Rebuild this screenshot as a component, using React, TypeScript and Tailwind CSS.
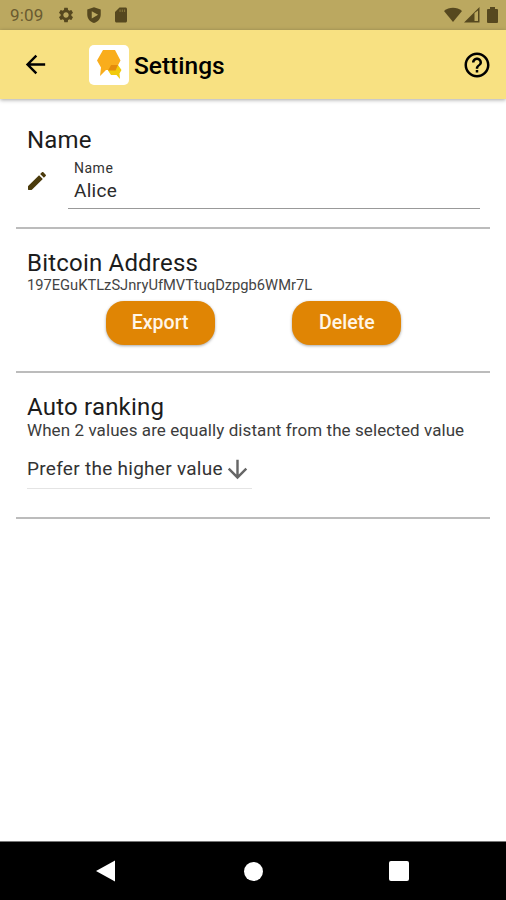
import type { ReactNode } from 'react'
import { MdArrowBack, MdArrowDownward, MdHelpOutline, MdSettings } from 'react-icons/md'

function StatusBar() {
  return (
    <div className="flex h-[30px] items-center bg-[#bba860] pl-[10px] pr-[8px] text-[#56481f]">
      <span className="w-[47px] text-[17px] leading-none tracking-[0.2px] text-[#6a5b30]">9:09</span>
      <MdSettings size={18} />
      <svg className="ml-[10px]" width="18" height="18" viewBox="0 0 24 24" fill="currentColor" fillRule="evenodd">
        <path d="M12 1.500 3 4.800v6.400c0 5.600 3.800 9.800 9 11.300 5.200-1.500 9-5.700 9-11.300V4.800L12 1.500zM9 7l8.500 4.500L9 16.500z" />
      </svg>
      <svg className="ml-[9px]" width="18" height="18" viewBox="0 0 24 24" fill="currentColor">
        <path d="M18 2h-8L4 8v12c0 1.100.9 2 2 2h12c1.100 0 2-.9 2-2V4c0-1.100-.9-2-2-2z" />
        <path d="M10 4.500h1.500V8H10zM13 4.500h1.500V8H13zM16 4.500h1.500V8H16z" fill="#85743a" />
      </svg>
      <div className="ml-auto flex items-center">
        <svg width="18" height="16" viewBox="0 0 18 16" fill="currentColor">
          <path d="M0 4C5-.3 13-.3 18 4L9 15z" />
        </svg>
        <svg className="ml-[2px]" width="16" height="16" viewBox="0 0 16 16" fill="currentColor" fillRule="evenodd">
          <path d="M15.500 0v15.500H0zM10.500 6v8H14V3.500z" />
        </svg>
        <svg className="ml-[7px]" width="11" height="16" viewBox="0 0 11 16" fill="currentColor">
          <path d="M3 0h5v2h2q1 0 1 1v12q0 1-1 1H1q-1 0-1-1V3q0-1 1-1h2z" />
        </svg>
      </div>
    </div>
  )
}

function Logo() {
  return (
    <div className="h-[40px] w-[40px] rounded-[5px] bg-white">
      <svg width="40" height="40" viewBox="0 0 40 40">
        <path d="M14 5h12l5.500 10.500L26.500 25H17l-6 6 1-8.500L8 15.500z" fill="#f9ad1c" />
        <path d="M22 20h7l3.500 5-2 3.500.5 5.500-3.500-4h-5.500L19 25.500z" fill="#f2cb0b" />
        <path d="M22 20h7L26.500 25.500H19z" fill="#e48b0c" />
      </svg>
    </div>
  )
}

function Header() {
  return (
    <header className="relative flex h-[69px] items-center bg-[#f8e182] pl-[21px] pr-[14px] text-black shadow-[0_1px_4px_rgba(0,0,0,0.35)]">
      <MdArrowBack size={29} />
      <div className="ml-[39px]">
        <Logo />
      </div>
      <h1 className="ml-[5px] pt-[3px] text-[24.500px] font-medium leading-none">Settings</h1>
      <MdHelpOutline className="ml-auto" size={30} />
    </header>
  )
}

function Section({ title, className, children }: { title: string; className: string; children: ReactNode }) {
  return (
    <section className={`mx-4 border-b-2 border-[#bcbcbc] px-[11px] ${className}`}>
      <h2 className="text-[24px] leading-[28px] tracking-[0.2px] text-[#1c1c1c]">{title}</h2>
      {children}
    </section>
  )
}

function PillButton({ children }: { children: ReactNode }) {
  return (
    <button className="h-[44px] w-[109px] rounded-[18px] bg-[#e08504] text-[19.500px] font-medium text-[#fff6e8] shadow-[0_1px_3px_rgba(0,0,0,0.35)]">
      {children}
    </button>
  )
}

function NavBar() {
  return (
    <nav className="flex h-[59px] items-center border-t border-[#777] bg-black pl-[96px] text-white">
      <svg width="20" height="22" viewBox="0 0 20 22" fill="currentColor">
        <path d="M0 11 19 .500v21z" />
      </svg>
      <div className="ml-[128px] h-[19px] w-[19px] rounded-full bg-white" />
      <div className="ml-[126px] h-[20px] w-[20px] rounded-[2px] bg-white" />
    </nav>
  )
}

export default function App() {
  return (
    <div className="flex h-[900px] w-[506px] flex-col overflow-hidden bg-white font-['Roboto',sans-serif]">
      <StatusBar />
      <Header />

      <main className="flex-1">
        <Section title="Name" className="h-[130px] pt-[27px]">
          <div className="flex">
            <svg className="-ml-[2px] mt-[15px] shrink-0" width="24" height="24" viewBox="0 0 24 24" fill="#4b3b0c">
              <path d="M3 17.460v3.040c0 .28.22.5.5.5h3.040c.13 0 .26-.05.35-.15L17.810 9.940l-3.750-3.750L3.150 17.100c-.1.1-.15.22-.15.36zM20.710 7.040c.39-.39.39-1.020 0-1.410l-2.340-2.340c-.39-.39-1.020-.39-1.410 0l-1.830 1.830 3.750 3.750 1.830-1.830z" />
            </svg>
            <div className="ml-[19px] h-[55px] w-[412px] shrink-0 border-b border-[#999] pl-[6px] pt-[6px]">
              <div className="text-[14px] leading-[16px] tracking-[0.5px] text-[#333]">Name</div>
              <div className="mt-[3px] text-[19px] leading-[24px] tracking-[0.3px] text-[#2b2b2b]">Alice</div>
            </div>
          </div>
        </Section>

        <Section title="Bitcoin Address" className="h-[144px] pt-[20px]">
          <div className="text-[14.700px] leading-[16px] text-[#444]">197EGuKTLzSJnryUfMVTtuqDzpgb6WMr7L</div>
          <div className="ml-[1px] mt-[8px] flex justify-evenly">
            <PillButton>Export</PillButton>
            <PillButton>Delete</PillButton>
          </div>
        </Section>

        <Section title="Auto ranking" className="h-[146px] pt-[20px]">
          <p className="whitespace-nowrap text-[17px] leading-[18px] tracking-[0.08px] text-[#3c3c3c]">
            When 2 values are equally distant from the selected value
          </p>
          <div className="mt-[9px] flex h-[41px] w-[225px] items-center border-b border-[#e4e4e4]">
            <span className="whitespace-nowrap pt-[2px] text-[19px] tracking-[0.28px] text-[#333]">Prefer the higher value</span>
            <MdArrowDownward className="ml-auto mt-[2px] shrink-0 text-[#666]" size={29} />
          </div>
        </Section>
      </main>

      <NavBar />
    </div>
  )
}
